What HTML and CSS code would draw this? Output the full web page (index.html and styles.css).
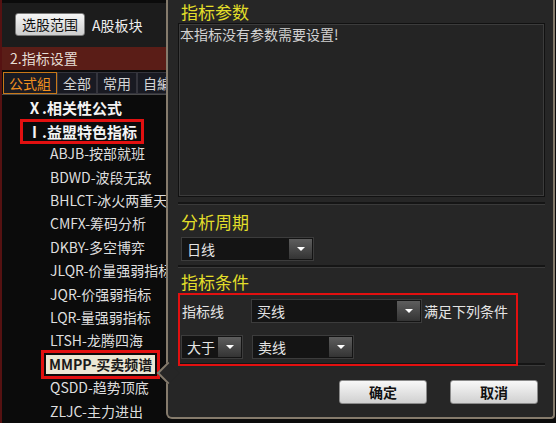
FILE: index.html
```html
<!DOCTYPE html>
<html lang="zh-CN">
<head>
  <meta charset="UTF-8" />
  <title>指标设置</title>
  <link rel="stylesheet" href="styles.css">
</head>
<body>
  <div class="screen">
    <!-- ========== LEFT: formula tree ========== -->
    <div class="sidebar">
      <div class="scope-bar">
        <span class="scope-btn">选股范围</span>
        <span class="scope-label">A股板块</span>
      </div>
      <div class="section-head">2.指标设置</div>
      <div class="tabs">
        <span class="tab active">公式組</span>
        <span class="tab">全部</span>
        <span class="tab">常用</span>
        <span class="tab">自編</span>
      </div>
      <div class="tree">
        <div class="tree-row group">Ⅹ.相关性公式</div>
        <div class="tree-row group"><span class="mark">Ⅰ.益盟特色指标</span></div>
        <div class="tree-row">ABJB-按部就班</div>
        <div class="tree-row">BDWD-波段无敌</div>
        <div class="tree-row">BHLCT-冰火两重天</div>
        <div class="tree-row">CMFX-筹码分析</div>
        <div class="tree-row">DKBY-多空博弈</div>
        <div class="tree-row">JLQR-价量强弱指标</div>
        <div class="tree-row">JQR-价强弱指标</div>
        <div class="tree-row">LQR-量强弱指标</div>
        <div class="tree-row">LTSH-龙腾四海</div>
        <div class="tree-row"><span class="picked">MMPP-买卖频谱</span></div>
        <div class="tree-row">QSDD-趋势顶底</div>
        <div class="tree-row">ZLJC-主力进出</div>
      </div>
    </div>

    <!-- ========== RIGHT: parameter popup ========== -->
    <div class="popup">
      <div class="pointer"></div>

      <div class="panel-title">指标参数</div>
      <div class="param-box">本指标没有参数需要设置!</div>
      <div class="divider"></div>

      <div class="panel-title period">分析周期</div>
      <div class="select period-select">
        <span class="select-text">日线</span>
        <span class="select-arrow"></span>
      </div>
      <div class="divider"></div>

      <div class="panel-title cond">指标条件</div>
      <div class="cond-box">
        <div class="cond-row">
          <span class="cond-label">指标线</span>
          <div class="select line-select">
            <span class="select-text">买线</span>
            <span class="select-arrow"></span>
          </div>
          <span class="cond-note">满足下列条件</span>
        </div>
        <div class="cond-row second">
          <div class="select op-select">
            <span class="select-text">大于</span>
            <span class="select-arrow"></span>
          </div>
          <div class="select target-select">
            <span class="select-text">卖线</span>
            <span class="select-arrow"></span>
          </div>
        </div>
      </div>
      <div class="divider under-box"></div>

      <div class="actions">
        <span class="btn">确定</span>
        <span class="btn">取消</span>
      </div>
    </div>
  </div>
</body>
</html>
```

FILE: styles.css
```css
* {
  margin: 0;
  padding: 0;
  box-sizing: border-box;
}

body {
  width: 556px;
  height: 423px;
  overflow: hidden;
  background: #0b0b0b;
  font-family: "Noto Sans CJK SC", sans-serif;
}

.screen {
  display: flex;
  height: 423px;
}

/* =========================================
   LEFT SIDEBAR
   ========================================= */
.sidebar {
  width: 166px;
  flex-shrink: 0;
  border-left: 2px solid #561212;
  background: #0b0b0b;
  overflow: hidden;
  display: flex;
  flex-direction: column;
}

.scope-bar {
  height: 49px;
  margin-top: 3px;
  background: #1c1c1c;
  display: flex;
  align-items: center;
  padding-left: 13px;
  gap: 7px;
}

.scope-btn {
  height: 23px;
  padding: 0 6px;
  line-height: 21px;
  font-size: 14px;
  color: #111;
  background: linear-gradient(#f6f6f6, #cdcdcd);
  border: 1px solid #7a7a7a;
  border-radius: 3px;
}

.scope-label {
  font-size: 14px;
  color: #eee;
}

.section-head {
  height: 23px;
  line-height: 23px;
  padding-left: 8px;
  font-size: 14px;
  color: #e6ddd4;
  background: #5a1d17;
}

.tabs {
  display: flex;
  margin-top: 2px;
  padding-left: 1px;
  height: 23px;
  border-bottom: 1px solid #4a4a4a;
}

.tab {
  padding: 0 5px;
  line-height: 20px;
  font-size: 14px;
  color: #d4d4d4;
  background: #191a22;
  border: 1px solid #34343c;
  white-space: nowrap;
}

.tab.active {
  color: #f09020;
  border-color: #c87818;
}

.tree {
  padding-top: 1px;
}

.tree-row {
  height: 23.4px;
  line-height: 23.4px;
  padding-left: 48px;
  font-size: 14px;
  color: #dedede;
  white-space: nowrap;
}

.tree-row.group {
  padding-left: 25px;
  font-size: 15px;
  font-weight: bold;
  color: #f4f4f4;
}

.mark {
  display: inline-block;
  margin-left: -7px;
  padding: 0 4px;
  line-height: 19px;
  border: 3px solid #e21010;
}

.picked {
  display: inline-block;
  margin-left: -4px;
  padding: 0 3px;
  line-height: 19px;
  font-weight: bold;
  color: #1a1a1a;
  background: #ece7d4;
  outline: 3px solid #e21010;
  outline-offset: 2px;
}

/* =========================================
   RIGHT POPUP
   ========================================= */
.popup {
  position: relative;
  width: 389px;
  height: 419px;
  flex-shrink: 0;
  padding: 0 8px 0 10px;
  background: #262626;
  border: 2px solid #857b6c;
  border-top: none;
  border-radius: 0 0 4px 6px;
}

.pointer {
  position: absolute;
  left: -8px;
  top: 365px;
  width: 16px;
  height: 16px;
  background: #262626;
  border-left: 2px solid #857b6c;
  border-bottom: 2px solid #857b6c;
  transform: rotate(45deg);
}

.panel-title {
  height: 23px;
  line-height: 23px;
  padding-left: 3px;
  font-size: 17px;
  color: #e2de2a;
}

.panel-title.period {
  height: 30px;
  line-height: 30px;
  margin-top: 2px;
}

.panel-title.cond {
  height: 24px;
  line-height: 26px;
  margin-top: 1px;
}

.param-box {
  height: 174px;
  padding: 2px 1px;
  line-height: 17px;
  font-size: 14px;
  color: #d2d2d2;
  background: #242424;
  border: 1px solid #111;
  box-shadow: inset 0 0 0 1px #3c3c3c;
}

.divider {
  margin-top: 5px;
  height: 3px;
  border-top: 2px solid #151515;
  border-bottom: 1px solid #3a3a3a;
}

.period-select + .divider {
  margin-top: 4px;
}

/* dropdowns */
.select {
  display: flex;
  height: 24px;
  background: #141414;
  border: 1px solid #3c3c3c;
}

.select-text {
  flex: 1;
  padding-left: 5px;
  line-height: 22px;
  font-size: 14px;
  color: #e4e4e4;
}

.select-arrow {
  width: 23px;
  margin: 1px;
  display: flex;
  align-items: center;
  justify-content: center;
  background: linear-gradient(#5e5e5e, #343434);
}

.select-arrow::after {
  content: "";
  border-left: 4px solid transparent;
  border-right: 4px solid transparent;
  border-top: 4px solid #fff;
}

.period-select {
  width: 133px;
  margin-left: 3px;
}

/* condition block */
.cond-box {
  position: relative;
  z-index: 1;
  width: 340px;
  height: 73px;
  padding: 4px 0 0 2px;
  border: 2px solid #e21010;
}

.cond-row {
  display: flex;
  align-items: center;
}

.cond-row.second {
  margin-top: 12px;
  margin-left: -1px;
  gap: 9px;
}

.cond-label {
  width: 69px;
  font-size: 14px;
  color: #e4e4e4;
}

.line-select {
  width: 171px;
}

.cond-note {
  margin-left: 2px;
  font-size: 14px;
  color: #e4e4e4;
  white-space: nowrap;
}

.op-select {
  width: 62px;
}

.target-select {
  width: 102px;
}

.divider.under-box {
  margin-top: -3px;
}

/* buttons */
.actions {
  display: flex;
  justify-content: flex-end;
  gap: 23px;
  margin-top: 14px;
  padding-right: 7px;
}

.btn {
  width: 88px;
  height: 24px;
  line-height: 22px;
  text-align: center;
  font-size: 14px;
  font-weight: bold;
  color: #111;
  background: linear-gradient(#f8f8f8, #d0d0d0);
  border: 1px solid #8a8a8a;
  border-radius: 3px;
}
```
